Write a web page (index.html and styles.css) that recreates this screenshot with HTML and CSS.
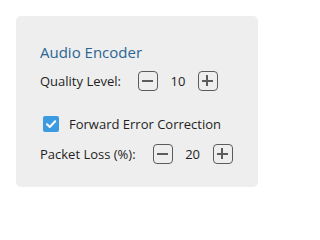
FILE: index.html
```html
<!DOCTYPE html>
<html>
<head>
<meta charset="utf-8">
<link rel="stylesheet" href="styles.css">
</head>
<body>
<div class="card">
  <div class="title">Audio Encoder</div>
  <div class="row row-quality">
    <span class="label">Quality Level:</span>
    <div class="stepper">
      <span class="btn"><span class="bar"></span></span>
      <span class="value">10</span>
      <span class="btn"><span class="bar"></span><span class="bar vert"></span></span>
    </div>
  </div>
  <div class="row row-check">
    <span class="check">
      <svg width="16" height="16" viewBox="0 0 16 16"><path d="M4 8.2 L6.8 11 L12.2 5.2" fill="none" stroke="#fff" stroke-width="2" stroke-linecap="round" stroke-linejoin="round"/></svg>
    </span>
    <span class="check-label">Forward Error Correction</span>
  </div>
  <div class="row row-loss">
    <span class="label">Packet Loss (%):</span>
    <div class="stepper">
      <span class="btn"><span class="bar"></span></span>
      <span class="value">20</span>
      <span class="btn"><span class="bar"></span><span class="bar vert"></span></span>
    </div>
  </div>
</div>
</body>
</html>
```
FILE: styles.css
```css
html, body {
  margin: 0;
  padding: 0;
  background: #ffffff;
}
body {
  padding: 16px;
  font-family: "Open Sans", "Noto Sans", sans-serif;
  color: #1e1e1e;
}
.card {
  width: 242px;
  height: 171px;
  box-sizing: border-box;
  background: #eeeeee;
  border-radius: 5px;
  padding: 26px 24px 0 24px;
}
.title {
  font-size: 15px;
  line-height: 20px;
  color: #2b6593;
}
.row {
  display: flex;
  align-items: center;
  font-size: 13px;
  height: 20px;
}
.row-quality {
  margin-top: 9px;
}
.row-check {
  margin-top: 23px;
  padding-left: 3px;
}
.row-loss {
  margin-top: 10px;
}
.label {
  margin-right: 17px;
}
.stepper {
  display: flex;
  align-items: center;
}
.btn {
  position: relative;
  width: 20px;
  height: 20px;
  box-sizing: border-box;
  border: 1.5px solid #5c5c5c;
  border-radius: 4px;
}
.bar {
  position: absolute;
  left: 3px;
  top: 7.5px;
  width: 11px;
  height: 2px;
  background: #5c5c5c;
}
.bar.vert {
  left: 7.5px;
  top: 3px;
  width: 2px;
  height: 11px;
}
.value {
  width: 40px;
  text-align: center;
}
.check {
  width: 16px;
  height: 16px;
  border-radius: 2px;
  background: #3c9be0;
  display: flex;
}
.check-label {
  margin-left: 10px;
}
```
